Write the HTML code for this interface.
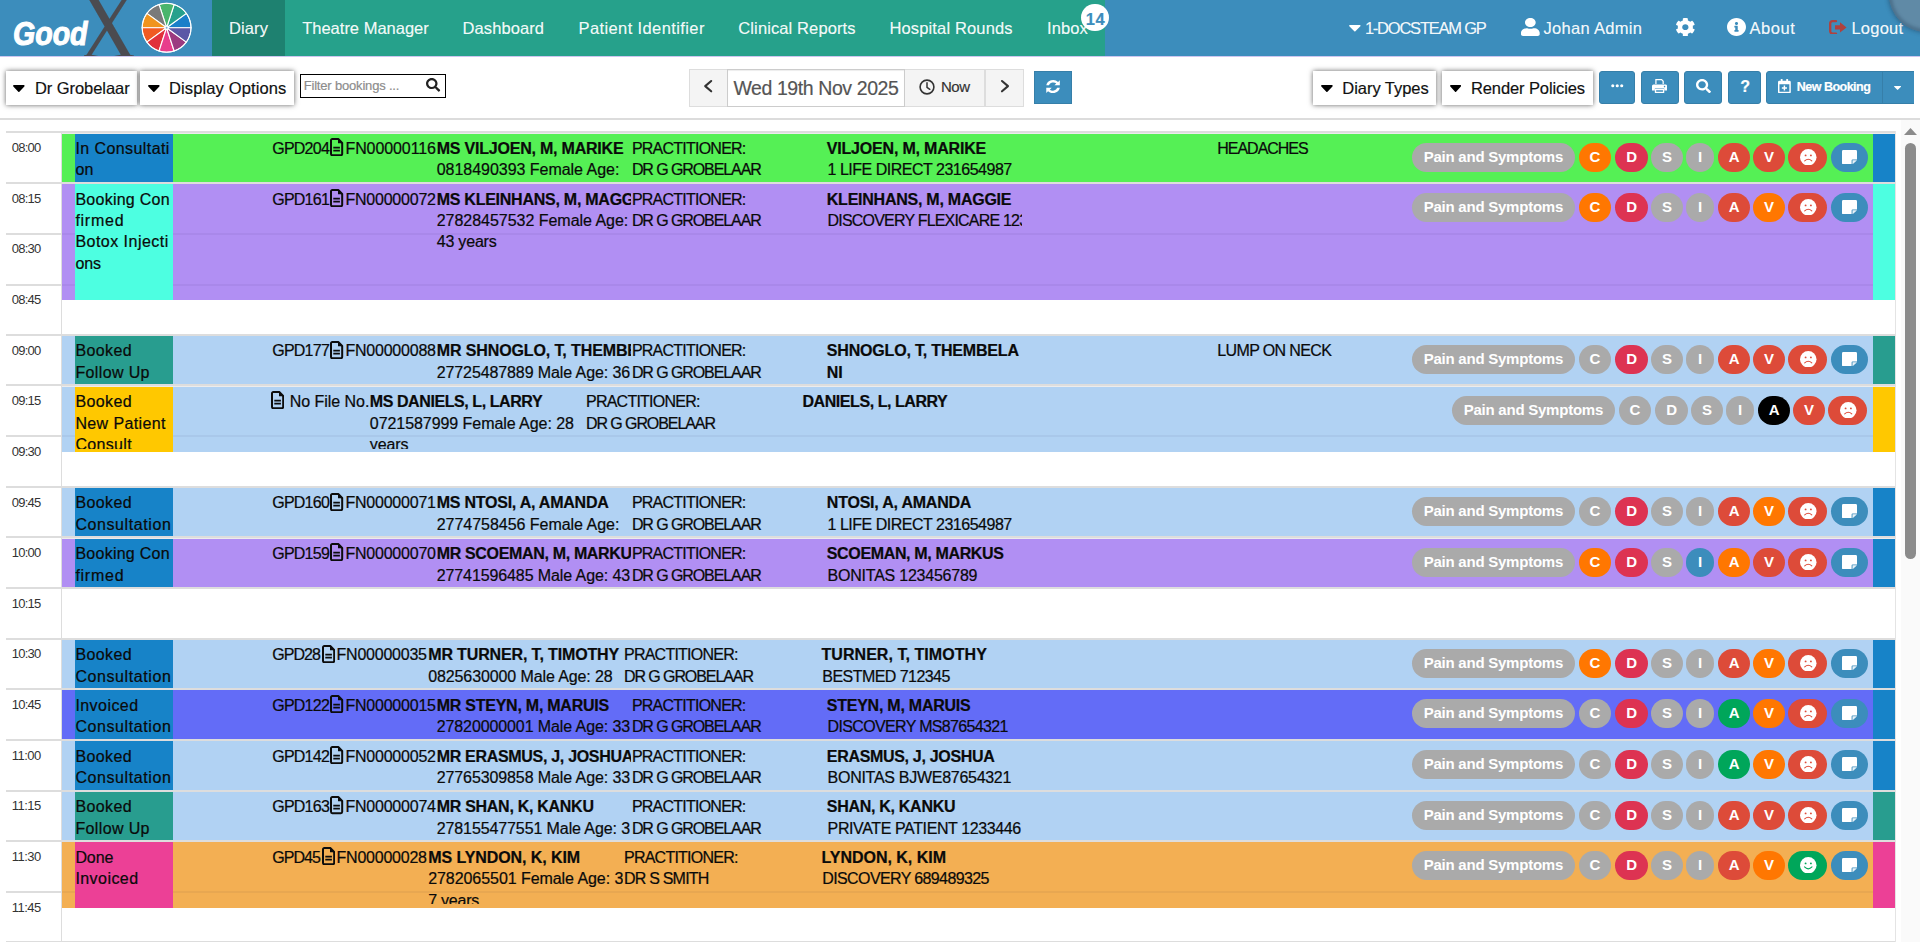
<!DOCTYPE html><html lang="en"><head><meta charset="utf-8"><title>GoodX Diary</title><style>
html,body{margin:0;padding:0}
body{width:1920px;height:942px;overflow:hidden;background:#fff;position:relative;font-family:"Liberation Sans",sans-serif;color:#111}
.b,.t,.ic,.c{position:absolute}
.t{white-space:nowrap;line-height:20px}
.b{box-sizing:border-box}
.c{overflow:hidden}
.ev .t{color:#0a0a0a;-webkit-text-stroke-width:.22px}
.bd{position:absolute;height:29px;border-radius:14.5px;top:9px}
.bd .t{color:#fff;-webkit-text-stroke-width:0}
#navbar .t,#toolbar .t{-webkit-text-stroke-width:.18px}
</style></head><body>
<div id="navbar">
<div class="b" style="left:0px;top:0px;width:1920px;height:56px;background:#3c8dbc;"></div>
<div class="b" style="left:212px;top:0px;width:893px;height:56px;background:#26a18b;"></div>
<div class="b" style="left:212px;top:0px;width:73px;height:56px;background:#1e8170;"></div>
<div class="b" style="left:0px;top:56px;width:1920px;height:1px;background:#cdc6f0;"></div>
<span class="t" style="left:13.2px;top:14.5px;font-size:34px;line-height:36px;font-weight:bold;font-style:italic;color:#fff;transform:scaleX(.84);transform-origin:0 0;letter-spacing:0px;-webkit-text-stroke:1.1px #fff">Good</span>
<div class="c" style="left:84px;top:0;width:50px;height:56px"><span class="t" style="left:-5px;top:-21px;font-family:'Liberation Serif',serif;font-size:96px;line-height:96px;color:#4b4b50;transform:scaleX(.845);transform-origin:0 0">X</span></div>
<svg class="ic" style="left:136.00px;top:0.00px;" width="62.00" height="56.00" viewBox="136 0 62 56" preserveAspectRatio="none"><path d="M166.6 27.75L191.00 27.75A24.4 24.4 0 0 0 186.34 13.41Z" fill="#1a7fc9" stroke="#fff" stroke-width="1.1"/><path d="M166.6 27.75L186.34 13.41A24.4 24.4 0 0 0 174.14 4.54Z" fill="#26a08c" stroke="#fff" stroke-width="1.1"/><path d="M166.6 27.75L174.14 4.54A24.4 24.4 0 0 0 159.06 4.54Z" fill="#4ab56c" stroke="#fff" stroke-width="1.1"/><path d="M166.6 27.75L159.06 4.54A24.4 24.4 0 0 0 146.86 13.41Z" fill="#7a7a7a" stroke="#fff" stroke-width="1.1"/><path d="M166.6 27.75L146.86 13.41A24.4 24.4 0 0 0 142.20 27.75Z" fill="#f0941e" stroke="#fff" stroke-width="1.1"/><path d="M166.6 27.75L142.20 27.75A24.4 24.4 0 0 0 146.86 42.09Z" fill="#f05a22" stroke="#fff" stroke-width="1.1"/><path d="M166.6 27.75L146.86 42.09A24.4 24.4 0 0 0 159.06 50.96Z" fill="#e0323c" stroke="#fff" stroke-width="1.1"/><path d="M166.6 27.75L159.06 50.96A24.4 24.4 0 0 0 174.14 50.96Z" fill="#e83e8c" stroke="#fff" stroke-width="1.1"/><path d="M166.6 27.75L174.14 50.96A24.4 24.4 0 0 0 186.34 42.09Z" fill="#9c3a80" stroke="#fff" stroke-width="1.1"/><path d="M166.6 27.75L186.34 42.09A24.4 24.4 0 0 0 191.00 27.75Z" fill="#5b57a6" stroke="#fff" stroke-width="1.1"/><circle cx="166.6" cy="27.75" r="24.4" fill="none" stroke="#fff" stroke-width="1"/><circle cx="166.6" cy="27.75" r="2.2" fill="#fff"/><circle cx="166.6" cy="27.75" r="1" fill="#7fb0d8"/></svg>
<span class="t" style="left:229.00px;top:18px;font-size:16.5px;letter-spacing:0.122px;color:rgba(255,255,255,.96);">Diary</span>
<span class="t" style="left:302.20px;top:18px;font-size:16.5px;color:rgba(255,255,255,.96);">Theatre Manager</span>
<span class="t" style="left:462.50px;top:18px;font-size:16.5px;letter-spacing:0.098px;color:rgba(255,255,255,.96);">Dashboard</span>
<span class="t" style="left:578.50px;top:18px;font-size:16.5px;letter-spacing:0.391px;color:rgba(255,255,255,.96);">Patient Identifier</span>
<span class="t" style="left:738.30px;top:18px;font-size:16.5px;letter-spacing:0.111px;color:rgba(255,255,255,.96);">Clinical Reports</span>
<span class="t" style="left:889.40px;top:18px;font-size:16.5px;letter-spacing:0.153px;color:rgba(255,255,255,.96);">Hospital Rounds</span>
<span class="t" style="left:1047.00px;top:18px;font-size:16.5px;letter-spacing:0.110px;color:rgba(255,255,255,.96);">Inbox</span>
<div class="b" style="left:1081.3px;top:3.8px;width:27.6px;height:27.6px;border-radius:50%;background:#fff"></div>
<span class="t" style="left:1085.70px;top:9px;font-size:16.5px;font-weight:bold;letter-spacing:0.652px;color:#3c8dbc;">14</span>
<svg class="ic" style="left:1348.90px;top:25.40px;" width="11.70" height="6.40" viewBox="9 192 302 169" preserveAspectRatio="none"><path fill="#fff" d="M31.3 192h257.3c17.8 0 26.7 21.5 14.1 34.1L174.1 354.8c-7.8 7.8-20.5 7.8-28.3 0L17.2 226.1C4.6 213.5 13.5 192 31.3 192z"/></svg>
<span class="t" style="left:1364.90px;top:18px;font-size:16.5px;letter-spacing:-1.225px;color:rgba(255,255,255,.96);">1-DOCSTEAM GP</span>
<svg class="ic" style="left:1521.00px;top:18.00px;" width="18.70" height="18.00" viewBox="0 0 448 512" preserveAspectRatio="none"><path fill="#fff" d="M224 256c70.7 0 128-57.3 128-128S294.7 0 224 0 96 57.3 96 128s57.300 128 128 128zm89.600 32h-16.700c-22.200 10.200-46.900 16-72.900 16s-50.600-5.800-72.900-16h-16.700C60.200 288 0 348.200 0 422.400V464c0 26.500 21.500 48 48 48h352c26.500 0 48-21.500 48-48v-41.600c0-74.200-60.200-134.400-134.400-134.400z"/></svg>
<span class="t" style="left:1543.50px;top:18px;font-size:16.5px;letter-spacing:0.310px;color:rgba(255,255,255,.96);">Johan Admin</span>
<svg class="ic" style="left:1676.00px;top:18.00px;" width="18.70" height="18.30" viewBox="18 8 476 496" preserveAspectRatio="none"><path fill="#fff" d="M487.400 315.700l-42.600-24.600c4.300-23.200 4.300-47 0-70.200l42.600-24.600c4.900-2.800 7.100-8.600 5.500-14-11.100-35.600-30-67.800-54.700-94.600-3.800-4.100-10-5.100-14.800-2.300L380.800 110c-17.900-15.400-38.500-27.300-60.800-35.100V25.800c0-5.600-3.900-10.500-9.400-11.700-36.700-8.200-74.300-7.800-109.200 0-5.500 1.200-9.400 6.100-9.400 11.700V75c-22.200 7.900-42.800 19.800-60.800 35.100L88.700 85.500c-4.900-2.800-11-1.900-14.800 2.300-24.700 26.700-43.600 58.900-54.700 94.600-1.700 5.400.6 11.200 5.500 14L67.300 221c-4.300 23.200-4.300 47 0 70.200l-42.600 24.600c-4.900 2.800-7.100 8.600-5.500 14 11.100 35.600 30 67.800 54.700 94.600 3.800 4.100 10 5.100 14.800 2.300l42.600-24.600c17.900 15.400 38.500 27.300 60.800 35.100v49.200c0 5.600 3.900 10.500 9.400 11.700 36.700 8.200 74.300 7.800 109.200 0 5.500-1.200 9.400-6.100 9.400-11.700v-49.200c22.200-7.900 42.800-19.800 60.800-35.100l42.600 24.600c4.900 2.800 11 1.900 14.800-2.300 24.700-26.700 43.600-58.900 54.700-94.600 1.500-5.500-.7-11.300-5.600-14.100zM256 336c-44.100 0-80-35.900-80-80s35.900-80 80-80 80 35.900 80 80-35.900 80-80 80z"/></svg>
<svg class="ic" style="left:1727.30px;top:18.30px;" width="19.00" height="18.00" viewBox="8 8 496 496" preserveAspectRatio="none"><path fill="#fff" d="M256 8C119.043 8 8 119.083 8 256c0 136.997 111.043 248 248 248s248-111.003 248-248C504 119.083 392.957 8 256 8zm0 110c23.196 0 42 18.804 42 42s-18.804 42-42 42-42-18.804-42-42 18.804-42 42-42zm56 254c0 6.627-5.373 12-12 12h-88c-6.627 0-12-5.373-12-12v-24c0-6.627 5.373-12 12-12h12v-64h-12c-6.627 0-12-5.373-12-12v-24c0-6.627 5.373-12 12-12h64c6.627 0 12 5.373 12 12v100h12c6.627 0 12 5.373 12 12v24z"/></svg>
<span class="t" style="left:1749.60px;top:18px;font-size:16.5px;letter-spacing:0.521px;color:rgba(255,255,255,.96);">About</span>
<svg class="ic" style="left:1828.90px;top:19.70px;" width="17.70" height="14.80" viewBox="0 0 17.7 15" preserveAspectRatio="none"><path d="M7 1.2H3.6A2.4 2.4 0 0 0 1.200 3.600V11.400A2.400 2.400 0 0 0 3.600 13.800H7" fill="none" stroke="#b0413e" stroke-width="2.3" stroke-linecap="round"/><path d="M6 5.400H11V2.300L17.600 7.500L11 12.700V9.600H6Z" fill="#b0413e"/></svg>
<span class="t" style="left:1851.40px;top:18px;font-size:16.5px;letter-spacing:0.245px;color:rgba(255,255,255,.96);">Logout</span>
<div class="b" style="left:1888.5px;top:-43.5px;width:75px;height:75px;border-radius:50%;background:rgba(140,136,140,.46);box-shadow:inset 0 0 3px 3px rgba(30,55,80,.28),0 0 4px 1px rgba(30,55,80,.45)"></div>
</div>
<div id="toolbar">
<div class="b" style="left:0px;top:118px;width:1920px;height:2px;background:#dcdcdc;"></div>
<div class="b" style="left:6px;top:71px;width:131px;height:34px;background:#fff;box-shadow:0 0 5px rgba(0,0,0,.62)"></div>
<svg class="ic" style="left:13.10px;top:85.10px;" width="11.70" height="6.90" viewBox="9 192 302 169" preserveAspectRatio="none"><path fill="#000" d="M31.3 192h257.3c17.8 0 26.7 21.5 14.1 34.1L174.1 354.8c-7.8 7.8-20.5 7.8-28.3 0L17.2 226.1C4.6 213.5 13.5 192 31.3 192z"/></svg>
<span class="t" style="left:34.90px;top:78px;font-size:16.5px;letter-spacing:-0.052px;color:#111;">Dr Grobelaar</span>
<div class="b" style="left:140px;top:71px;width:154px;height:34px;background:#fff;box-shadow:0 0 5px rgba(0,0,0,.62)"></div>
<svg class="ic" style="left:148.00px;top:85.10px;" width="11.70" height="6.90" viewBox="9 192 302 169" preserveAspectRatio="none"><path fill="#000" d="M31.3 192h257.3c17.8 0 26.7 21.5 14.1 34.1L174.1 354.8c-7.8 7.8-20.5 7.8-28.3 0L17.2 226.1C4.6 213.5 13.5 192 31.3 192z"/></svg>
<span class="t" style="left:169.00px;top:78px;font-size:16.5px;letter-spacing:0.125px;color:#111;">Display Options</span>
<div class="b" style="left:1313px;top:71px;width:123px;height:34px;background:#fff;box-shadow:0 0 5px rgba(0,0,0,.62)"></div>
<svg class="ic" style="left:1321.00px;top:85.10px;" width="11.80" height="6.90" viewBox="9 192 302 169" preserveAspectRatio="none"><path fill="#000" d="M31.3 192h257.3c17.8 0 26.7 21.5 14.1 34.1L174.1 354.8c-7.8 7.8-20.5 7.8-28.3 0L17.2 226.1C4.6 213.5 13.5 192 31.3 192z"/></svg>
<span class="t" style="left:1342.30px;top:78px;font-size:16.5px;letter-spacing:-0.041px;color:#111;">Diary Types</span>
<div class="b" style="left:1442px;top:71px;width:151px;height:34px;background:#fff;box-shadow:0 0 5px rgba(0,0,0,.62)"></div>
<svg class="ic" style="left:1449.80px;top:85.10px;" width="11.20" height="6.90" viewBox="9 192 302 169" preserveAspectRatio="none"><path fill="#000" d="M31.3 192h257.3c17.8 0 26.7 21.5 14.1 34.1L174.1 354.8c-7.8 7.8-20.5 7.8-28.3 0L17.2 226.1C4.6 213.5 13.5 192 31.3 192z"/></svg>
<span class="t" style="left:1471.00px;top:78px;font-size:16.5px;letter-spacing:-0.111px;color:#111;">Render Policies</span>
<div class="b" style="left:300px;top:74px;width:146px;height:24px;border:1px solid #000;background:#fff"></div>
<span class="t" style="left:303.70px;top:76px;font-size:13px;letter-spacing:-0.182px;color:#8c8c8c;">Filter bookings ...</span>
<svg class="ic" style="left:426.40px;top:78.20px;" width="14.20" height="13.70" viewBox="0 0 512 512" preserveAspectRatio="none"><path fill="#222" d="M505 442.700L405.300 343c-4.500-4.500-10.600-7-17-7H372c27.600-35.300 44-79.700 44-128C416 93.100 322.900 0 208 0S0 93.100 0 208s93.100 208 208 208c48.300 0 92.700-16.400 128-44v16.300c0 6.400 2.500 12.500 7 17l99.700 99.700c9.400 9.400 24.600 9.400 33.900 0l28.300-28.300c9.400-9.400 9.400-24.600.100-34zM208 336c-70.700 0-128-57.200-128-128 0-70.700 57.200-128 128-128 70.700 0 128 57.200 128 128 0 70.700-57.200 128-128 128z"/></svg>
<div class="b" style="left:689px;top:69px;width:39px;height:38px;background:#f4f4f4;border:1px solid #ddd"></div>
<div class="b" style="left:904px;top:69px;width:81px;height:38px;background:#f4f4f4;border:1px solid #ddd"></div>
<div class="b" style="left:985px;top:69px;width:39px;height:38px;background:#f4f4f4;border:1px solid #ddd"></div>
<div class="b" style="left:727px;top:69px;width:178px;height:38px;background:#fff;border:1px solid #ccc;box-shadow:inset 0 1px 1px rgba(0,0,0,.075)"></div>
<span class="t" style="left:733.40px;top:76px;font-size:19.5px;line-height:24px;letter-spacing:-0.407px;color:#555;">Wed 19th Nov 2025</span>
<svg class="ic" style="left:703.30px;top:79.00px;" width="10.20" height="14.30" viewBox="0 0 10.2 14.3" preserveAspectRatio="none"><path d="M8.200 2L2.200 7.150L8.200 12.300" fill="none" stroke="#333" stroke-width="2.100" stroke-linecap="round" stroke-linejoin="round"/></svg>
<svg class="ic" style="left:999.80px;top:79.00px;" width="10.20" height="14.30" viewBox="0 0 10.2 14.3" preserveAspectRatio="none"><path d="M2 2L8 7.150L2 12.300" fill="none" stroke="#333" stroke-width="2.100" stroke-linecap="round" stroke-linejoin="round"/></svg>
<svg class="ic" style="left:918.70px;top:78.50px;" width="16.00" height="16.00" viewBox="0 0 16 16" preserveAspectRatio="none"><circle cx="8" cy="8" r="6.900" fill="none" stroke="#333" stroke-width="1.600"/><path d="M8 3.800V8.300L10.800 10.300" fill="none" stroke="#333" stroke-width="1.500" stroke-linecap="round"/></svg>
<span class="t" style="left:941.00px;top:77px;font-size:15px;letter-spacing:-0.523px;color:#333;">Now</span>
<div class="b" style="left:1033.5px;top:71px;width:38.500px;height:33px;background:#3c8dbc;border:1px solid #367fa9"></div>
<svg class="ic" style="left:1046.00px;top:80.10px;" width="14.10" height="13.20" viewBox="0 0 16 16" preserveAspectRatio="none"><path d="M13.700 2.300A8 8 0 0 0 0.300 6.500H3.300A5.200 5.200 0 0 1 11.700 4.300L9.500 6.500H15.700V0.300ZM2.300 13.700A8 8 0 0 0 15.700 9.500H12.700A5.200 5.200 0 0 1 4.300 11.700L6.500 9.500H0.300V15.700Z" fill="#fff"/></svg>
<div class="b" style="left:1599px;top:71px;width:36px;height:33px;background:#3c8dbc;border:1px solid #367fa9;border-radius:3px;"></div>
<div class="b" style="left:1641px;top:71px;width:38px;height:33px;background:#3c8dbc;border:1px solid #367fa9;border-radius:3px;"></div>
<div class="b" style="left:1684px;top:71px;width:38px;height:33px;background:#3c8dbc;border:1px solid #367fa9;border-radius:3px;"></div>
<div class="b" style="left:1728px;top:71px;width:33px;height:33px;background:#3c8dbc;border:1px solid #367fa9;border-radius:3px;"></div>
<div class="b" style="left:1766px;top:71px;width:117px;height:33px;background:#3c8dbc;border:1px solid #367fa9;border-radius:3px;border-radius:3px 0 0 3px"></div>
<div class="b" style="left:1882px;top:71px;width:32px;height:33px;background:#3c8dbc;border:1px solid #367fa9;border-radius:3px;border-radius:0;border-right:0"></div>
<svg class="ic" style="left:1611.00px;top:84.10px;" width="12.50" height="3.60" viewBox="0 0 12 3.5" preserveAspectRatio="none"><circle cx="1.700" cy="1.750" r="1.500" fill="#fff"/><circle cx="6" cy="1.750" r="1.500" fill="#fff"/><circle cx="10.300" cy="1.750" r="1.500" fill="#fff"/></svg>
<svg class="ic" style="left:1652.20px;top:78.80px;" width="15.10" height="14.00" viewBox="0 0 16 14" preserveAspectRatio="none"><path d="M3.500 0H10.500L12.500 2V5H3.500Z M4.800 1.300V5H11.200V2.600L10 1.300Z" fill="#fff" fill-rule="evenodd"/><path d="M1.600 5.500H14.400A1.600 1.600 0 0 1 16 7.100V11.500H13V9.500H3V11.500H0V7.100A1.600 1.600 0 0 1 1.600 5.500Z" fill="#fff"/><path d="M3 10H13V14H3Z M4.400 11.300V12.700H11.600V11.300Z" fill="#fff" fill-rule="evenodd"/><circle cx="13.300" cy="7.600" r=".8" fill="#3c8dbc"/></svg>
<svg class="ic" style="left:1695.70px;top:78.90px;" width="15.00" height="14.10" viewBox="0 0 512 512" preserveAspectRatio="none"><path fill="#fff" d="M505 442.700L405.300 343c-4.500-4.500-10.600-7-17-7H372c27.600-35.300 44-79.700 44-128C416 93.100 322.900 0 208 0S0 93.100 0 208s93.100 208 208 208c48.300 0 92.700-16.400 128-44v16.300c0 6.400 2.500 12.500 7 17l99.700 99.700c9.400 9.400 24.600 9.400 33.900 0l28.300-28.300c9.400-9.400 9.400-24.600.100-34zM208 336c-70.700 0-128-57.200-128-128 0-70.700 57.200-128 128-128 70.700 0 128 57.200 128 128 0 70.700-57.200 128-128 128z"/></svg>
<span class="t" style="left:1740.20px;top:77px;font-size:16px;font-weight:bold;color:#fff;">?</span>
<svg class="ic" style="left:1778.20px;top:78.60px;" width="12.80" height="14.30" viewBox="0 0 14 15.5" preserveAspectRatio="none"><path d="M1.500 2H12.500A1.500 1.500 0 0 1 14 3.500V14A1.500 1.500 0 0 1 12.500 15.500H1.500A1.500 1.500 0 0 1 0 14V3.500A1.500 1.500 0 0 1 1.500 2Z M1.600 5.600V13.900H12.400V5.600Z" fill="#fff" fill-rule="evenodd"/><rect x="3" y="0" width="2" height="3.500" rx=".6" fill="#fff"/><rect x="9" y="0" width="2" height="3.500" rx=".6" fill="#fff"/><path d="M6.200 7H7.800V9H9.800V10.600H7.800V12.600H6.200V10.600H4.200V9H6.200Z" fill="#fff"/></svg>
<span class="t" style="left:1796.80px;top:77px;font-size:12.5px;font-weight:bold;letter-spacing:-0.517px;color:#fff;">New Booking</span>
<svg class="ic" style="left:1894.20px;top:86.00px;" width="7.20" height="4.00" viewBox="9 192 302 169" preserveAspectRatio="none"><path fill="#fff" d="M31.3 192h257.3c17.8 0 26.7 21.5 14.1 34.1L174.1 354.8c-7.8 7.8-20.5 7.8-28.3 0L17.2 226.1C4.6 213.5 13.5 192 31.3 192z"/></svg>
</div>
<div id="grid">
<div class="b" style="left:1901px;top:120px;width:19px;height:822px;background:#fafafa;"></div>
<svg class="ic" style="left:1904px;top:128px" width="13" height="7" viewBox="0 0 13 7"><path d="M0 7L6.500 0L13 7Z" fill="#8b8b8b"/></svg>
<div class="b" style="left:1905px;top:143px;width:11px;height:416px;background:#8b8b8b;border-radius:5.5px"></div>
<div class="b" style="left:61px;top:131px;width:1px;height:811px;background:#dddddd;"></div>
<div class="b" style="left:1895px;top:131px;width:1px;height:811px;background:#e4e4e4;"></div>
<div class="b" style="left:6px;top:131px;width:1889px;height:2px;background:#dddddd;"></div>
<div class="b" style="left:62px;top:133px;width:1833px;height:1px;background:#ececec;"></div>
<div class="b" style="left:6px;top:182px;width:1889px;height:2px;background:#dddddd;"></div>
<div class="b" style="left:6px;top:233px;width:1889px;height:2px;background:#dddddd;"></div>
<div class="b" style="left:6px;top:284px;width:1889px;height:2px;background:#dddddd;"></div>
<div class="b" style="left:6px;top:334px;width:1889px;height:2px;background:#dddddd;"></div>
<div class="b" style="left:6px;top:384px;width:1889px;height:2px;background:#dddddd;"></div>
<div class="b" style="left:62px;top:386px;width:1833px;height:1px;background:#ececec;"></div>
<div class="b" style="left:6px;top:435px;width:1889px;height:2px;background:#dddddd;"></div>
<div class="b" style="left:6px;top:486px;width:1889px;height:2px;background:#dddddd;"></div>
<div class="b" style="left:6px;top:536px;width:1889px;height:2px;background:#dddddd;"></div>
<div class="b" style="left:62px;top:538px;width:1833px;height:1px;background:#ececec;"></div>
<div class="b" style="left:6px;top:587px;width:1889px;height:2px;background:#dddddd;"></div>
<div class="b" style="left:6px;top:638px;width:1889px;height:2px;background:#dddddd;"></div>
<div class="b" style="left:6px;top:688px;width:1889px;height:2px;background:#dddddd;"></div>
<div class="b" style="left:6px;top:739px;width:1889px;height:2px;background:#dddddd;"></div>
<div class="b" style="left:6px;top:790px;width:1889px;height:2px;background:#dddddd;"></div>
<div class="b" style="left:6px;top:840px;width:1889px;height:2px;background:#dddddd;"></div>
<div class="b" style="left:6px;top:891px;width:1889px;height:2px;background:#dddddd;"></div>
<div class="b" style="left:6px;top:941px;width:1889px;height:2px;background:#dddddd;"></div>
<span class="t" style="left:11.65px;top:138px;font-size:13px;letter-spacing:-0.707px;color:#333;">08:00</span>
<span class="t" style="left:11.65px;top:189px;font-size:13px;letter-spacing:-0.707px;color:#333;">08:15</span>
<span class="t" style="left:11.65px;top:239px;font-size:13px;letter-spacing:-0.707px;color:#333;">08:30</span>
<span class="t" style="left:11.65px;top:290px;font-size:13px;letter-spacing:-0.707px;color:#333;">08:45</span>
<span class="t" style="left:11.65px;top:341px;font-size:13px;letter-spacing:-0.707px;color:#333;">09:00</span>
<span class="t" style="left:11.65px;top:391px;font-size:13px;letter-spacing:-0.707px;color:#333;">09:15</span>
<span class="t" style="left:11.65px;top:442px;font-size:13px;letter-spacing:-0.707px;color:#333;">09:30</span>
<span class="t" style="left:11.65px;top:493px;font-size:13px;letter-spacing:-0.707px;color:#333;">09:45</span>
<span class="t" style="left:11.65px;top:543px;font-size:13px;letter-spacing:-0.707px;color:#333;">10:00</span>
<span class="t" style="left:11.65px;top:594px;font-size:13px;letter-spacing:-0.707px;color:#333;">10:15</span>
<span class="t" style="left:11.65px;top:644px;font-size:13px;letter-spacing:-0.707px;color:#333;">10:30</span>
<span class="t" style="left:11.65px;top:695px;font-size:13px;letter-spacing:-0.707px;color:#333;">10:45</span>
<span class="t" style="left:11.65px;top:746px;font-size:13px;letter-spacing:-0.466px;color:#333;">11:00</span>
<span class="t" style="left:11.65px;top:796px;font-size:13px;letter-spacing:-0.466px;color:#333;">11:15</span>
<span class="t" style="left:11.65px;top:847px;font-size:13px;letter-spacing:-0.466px;color:#333;">11:30</span>
<span class="t" style="left:11.65px;top:898px;font-size:13px;letter-spacing:-0.466px;color:#333;">11:45</span>
<div class="b ev" style="left:62px;top:134px;width:1833px;height:48px;background:#55f055;overflow:hidden"><div class="b" style="left:13px;top:0;width:98px;height:48px;background:#1783c8"></div><div class="b" style="left:1811px;top:0;width:22px;height:48px;background:#1783c8"></div><div class="c" style="left:0;top:0;width:1811px;height:45px"><span class="t" style="left:13.40px;top:5px;font-size:16px;letter-spacing:0.424px;">In Consultati</span><span class="t" style="left:13.40px;top:26px;font-size:16px;letter-spacing:0.190px;">on</span><span class="t" style="left:210.20px;top:5px;font-size:16px;letter-spacing:-0.756px;">GPD204</span><svg class="ic" style="left:268.48px;top:4.00px;" width="13.20" height="18.20" viewBox="0 0 13.2 17.7" preserveAspectRatio="none"><path d="M2.300 1H8.300L12.200 4.900V15.400A1.300 1.300 0 0 1 10.900 16.700H2.300A1.300 1.300 0 0 1 1 15.400V2.300A1.300 1.300 0 0 1 2.300 1Z" fill="none" stroke="#0c0c0c" stroke-width="2" stroke-linejoin="round"/><path d="M8 0.800L12.400 5.200H8Z" fill="#0c0c0c"/><path d="M3.300 9.300H9.900M3.300 12.300H9.900" stroke="#0c0c0c" stroke-width="1.800"/></svg><span class="t" style="left:283.48px;top:5px;font-size:16px;letter-spacing:-0.094px;">FN00000116</span><div class="c" style="left:372.70px;top:0;width:196.50px;height:48px"><span class="t" style="left:2.00px;top:5px;font-size:16px;font-weight:bold;letter-spacing:-0.210px;">MS VILJOEN, M, MARIKE</span><span class="t" style="left:2.00px;top:26px;font-size:16px;letter-spacing:-0.029px;">0818490393 Female Age:</span></div><span class="t" style="left:569.90px;top:5px;font-size:16px;letter-spacing:-0.764px;">PRACTITIONER:</span><span class="t" style="left:569.90px;top:26px;font-size:16px;letter-spacing:-1.084px;">DR G GROBELAAR</span><div class="c" style="left:762.80px;top:0;width:197.00px;height:48px"><span class="t" style="left:2.00px;top:5px;font-size:16px;font-weight:bold;letter-spacing:-0.191px;">VILJOEN, M, MARIKE</span><span class="t" style="left:2.80px;top:26px;font-size:16px;letter-spacing:-0.490px;">1 LIFE DIRECT 231654987</span></div><span class="t" style="left:1155.30px;top:5px;font-size:16px;letter-spacing:-1.027px;">HEADACHES</span></div><div class="bd" style="margin-left:-62px;left:1412.0px;width:163.0px;background:#aaaaaa"><span class="t" style="left:11.70px;top:4px;font-size:15px;font-weight:bold;letter-spacing:-0.236px;">Pain and Symptoms</span></div><div class="bd" style="margin-left:-62px;left:1579.0px;width:32.0px;background:#ff7701"><span class="t" style="left:10.59px;top:4px;font-size:15px;font-weight:bold;">C</span></div><div class="bd" style="margin-left:-62px;left:1615.3px;width:32.5px;background:#dd3352"><span class="t" style="left:10.84px;top:4px;font-size:15px;font-weight:bold;">D</span></div><div class="bd" style="margin-left:-62px;left:1651.1px;width:31.9px;background:#aaaaaa"><span class="t" style="left:10.95px;top:4px;font-size:15px;font-weight:bold;">S</span></div><div class="bd" style="margin-left:-62px;left:1686.0px;width:28.0px;background:#aaaaaa"><span class="t" style="left:11.91px;top:4px;font-size:15px;font-weight:bold;">I</span></div><div class="bd" style="margin-left:-62px;left:1718.1px;width:31.9px;background:#dd4b39"><span class="t" style="left:10.54px;top:4px;font-size:15px;font-weight:bold;">A</span></div><div class="bd" style="margin-left:-62px;left:1753.0px;width:31.9px;background:#dd4b39"><span class="t" style="left:10.95px;top:4px;font-size:15px;font-weight:bold;">V</span></div><div class="bd" style="margin-left:-62px;left:1788.3px;width:38.8px;background:#dd4b39"><svg class="ic" style="left:11.75px;top:5.80px;" width="16.50" height="16.50" viewBox="0 0 16.5 16.5" preserveAspectRatio="none"><circle cx="8.250" cy="8.250" r="8.250" fill="#fff"/><circle cx="5.600" cy="6.400" r=".95" fill="#dd4b39"/><circle cx="10.900" cy="6.400" r=".95" fill="#dd4b39"/><path d="M4.700 11.900Q8.250 8.600 11.800 11.900" fill="none" stroke="#dd4b39" stroke-width="1.050" stroke-linecap="round"/></svg></div><div class="bd" style="margin-left:-62px;left:1830.9px;width:37.3px;background:#3c8dbc"><svg class="ic" style="left:11.45px;top:6.60px;" width="15.00" height="14.40" viewBox="0 0 15 13.5" preserveAspectRatio="none"><path d="M1.300 0H13.700A1.300 1.300 0 0 1 15 1.300V8.800H10.600A1 1 0 0 0 9.600 9.800V13.500H1.300A1.300 1.300 0 0 1 0 12.200V1.300A1.300 1.300 0 0 1 1.300 0Z" fill="#fff"/><path d="M10.500 9.700H15L10.500 13.500Z" fill="#fff" opacity=".88"/></svg></div></div>
<div class="b ev" style="left:62px;top:184px;width:1833px;height:116px;background:#b18ff3;overflow:hidden"><div class="b" style="left:0;top:49px;width:1811px;height:2px;background:rgba(0,0,40,.045)"></div><div class="b" style="left:0;top:100px;width:1811px;height:2px;background:rgba(0,0,40,.045)"></div><div class="b" style="left:13px;top:0;width:98px;height:116px;background:#4dffe1"></div><div class="b" style="left:1811px;top:0;width:22px;height:116px;background:#4dffe1"></div><div class="c" style="left:0;top:0;width:1811px;height:113px"><span class="t" style="left:13.40px;top:6px;font-size:16px;letter-spacing:0.260px;">Booking Con</span><span class="t" style="left:13.40px;top:27px;font-size:16px;letter-spacing:0.740px;">firmed</span><span class="t" style="left:13.40px;top:48px;font-size:16px;letter-spacing:0.476px;">Botox Injecti</span><span class="t" style="left:13.40px;top:70px;font-size:16px;letter-spacing:-0.134px;">ons</span><span class="t" style="left:210.20px;top:6px;font-size:16px;letter-spacing:-0.756px;">GPD161</span><svg class="ic" style="left:268.48px;top:4.65px;" width="13.20" height="18.20" viewBox="0 0 13.2 17.7" preserveAspectRatio="none"><path d="M2.300 1H8.300L12.200 4.900V15.400A1.300 1.300 0 0 1 10.900 16.700H2.300A1.300 1.300 0 0 1 1 15.400V2.300A1.300 1.300 0 0 1 2.300 1Z" fill="none" stroke="#0c0c0c" stroke-width="2" stroke-linejoin="round"/><path d="M8 0.800L12.400 5.200H8Z" fill="#0c0c0c"/><path d="M3.300 9.300H9.900M3.300 12.300H9.900" stroke="#0c0c0c" stroke-width="1.800"/></svg><span class="t" style="left:283.48px;top:6px;font-size:16px;letter-spacing:-0.225px;">FN00000072</span><div class="c" style="left:372.70px;top:0;width:196.50px;height:116px"><span class="t" style="left:2.00px;top:6px;font-size:16px;font-weight:bold;letter-spacing:-0.254px;">MS KLEINHANS, M, MAGGIE</span><span class="t" style="left:2.00px;top:27px;font-size:16px;letter-spacing:-0.026px;">27828457532 Female Age:</span><span class="t" style="left:2.00px;top:48px;font-size:16px;letter-spacing:-0.185px;">43 years</span></div><span class="t" style="left:569.90px;top:6px;font-size:16px;letter-spacing:-0.764px;">PRACTITIONER:</span><span class="t" style="left:569.90px;top:27px;font-size:16px;letter-spacing:-1.084px;">DR G GROBELAAR</span><div class="c" style="left:762.80px;top:0;width:197.00px;height:116px"><span class="t" style="left:2.00px;top:6px;font-size:16px;font-weight:bold;letter-spacing:-0.244px;">KLEINHANS, M, MAGGIE</span><span class="t" style="left:2.80px;top:27px;font-size:16px;letter-spacing:-0.804px;">DISCOVERY FLEXICARE 123456</span></div></div><div class="bd" style="margin-left:-62px;left:1412.0px;width:163.0px;background:#aaaaaa"><span class="t" style="left:11.70px;top:4px;font-size:15px;font-weight:bold;letter-spacing:-0.236px;">Pain and Symptoms</span></div><div class="bd" style="margin-left:-62px;left:1579.0px;width:32.0px;background:#ff7701"><span class="t" style="left:10.59px;top:4px;font-size:15px;font-weight:bold;">C</span></div><div class="bd" style="margin-left:-62px;left:1615.3px;width:32.5px;background:#dd3352"><span class="t" style="left:10.84px;top:4px;font-size:15px;font-weight:bold;">D</span></div><div class="bd" style="margin-left:-62px;left:1651.1px;width:31.9px;background:#aaaaaa"><span class="t" style="left:10.95px;top:4px;font-size:15px;font-weight:bold;">S</span></div><div class="bd" style="margin-left:-62px;left:1686.0px;width:28.0px;background:#aaaaaa"><span class="t" style="left:11.91px;top:4px;font-size:15px;font-weight:bold;">I</span></div><div class="bd" style="margin-left:-62px;left:1718.1px;width:31.9px;background:#dd4b39"><span class="t" style="left:10.54px;top:4px;font-size:15px;font-weight:bold;">A</span></div><div class="bd" style="margin-left:-62px;left:1753.0px;width:31.9px;background:#ff7701"><span class="t" style="left:10.95px;top:4px;font-size:15px;font-weight:bold;">V</span></div><div class="bd" style="margin-left:-62px;left:1788.3px;width:38.8px;background:#dd4b39"><svg class="ic" style="left:11.75px;top:5.80px;" width="16.50" height="16.50" viewBox="0 0 16.5 16.5" preserveAspectRatio="none"><circle cx="8.250" cy="8.250" r="8.250" fill="#fff"/><circle cx="5.600" cy="6.400" r=".95" fill="#dd4b39"/><circle cx="10.900" cy="6.400" r=".95" fill="#dd4b39"/><path d="M4.700 11.900Q8.250 8.600 11.800 11.900" fill="none" stroke="#dd4b39" stroke-width="1.050" stroke-linecap="round"/></svg></div><div class="bd" style="margin-left:-62px;left:1830.9px;width:37.3px;background:#3c8dbc"><svg class="ic" style="left:11.45px;top:6.60px;" width="15.00" height="14.40" viewBox="0 0 15 13.5" preserveAspectRatio="none"><path d="M1.300 0H13.700A1.300 1.300 0 0 1 15 1.300V8.800H10.600A1 1 0 0 0 9.600 9.800V13.500H1.300A1.300 1.300 0 0 1 0 12.200V1.300A1.300 1.300 0 0 1 1.300 0Z" fill="#fff"/><path d="M10.500 9.700H15L10.500 13.500Z" fill="#fff" opacity=".88"/></svg></div></div>
<div class="b ev" style="left:62px;top:336px;width:1833px;height:48px;background:#b1d2f3;overflow:hidden"><div class="b" style="left:13px;top:0;width:98px;height:48px;background:#289d8f"></div><div class="b" style="left:1811px;top:0;width:22px;height:48px;background:#289d8f"></div><div class="c" style="left:0;top:0;width:1811px;height:45px"><span class="t" style="left:13.40px;top:5px;font-size:16px;letter-spacing:0.406px;">Booked</span><span class="t" style="left:13.40px;top:27px;font-size:16px;letter-spacing:0.371px;">Follow Up</span><span class="t" style="left:210.20px;top:5px;font-size:16px;letter-spacing:-0.756px;">GPD177</span><svg class="ic" style="left:268.48px;top:4.60px;" width="13.20" height="18.20" viewBox="0 0 13.2 17.7" preserveAspectRatio="none"><path d="M2.300 1H8.300L12.200 4.900V15.400A1.300 1.300 0 0 1 10.900 16.700H2.300A1.300 1.300 0 0 1 1 15.400V2.300A1.300 1.300 0 0 1 2.300 1Z" fill="none" stroke="#0c0c0c" stroke-width="2" stroke-linejoin="round"/><path d="M8 0.800L12.400 5.200H8Z" fill="#0c0c0c"/><path d="M3.300 9.300H9.900M3.300 12.300H9.900" stroke="#0c0c0c" stroke-width="1.800"/></svg><span class="t" style="left:283.48px;top:5px;font-size:16px;letter-spacing:-0.225px;">FN00000088</span><div class="c" style="left:372.70px;top:0;width:196.50px;height:48px"><span class="t" style="left:2.00px;top:5px;font-size:16px;font-weight:bold;letter-spacing:-0.110px;">MR SHNOGLO, T, THEMBELANI</span><span class="t" style="left:2.00px;top:27px;font-size:16px;letter-spacing:-0.100px;">27725487889 Male Age: 36</span></div><span class="t" style="left:569.90px;top:5px;font-size:16px;letter-spacing:-0.764px;">PRACTITIONER:</span><span class="t" style="left:569.90px;top:27px;font-size:16px;letter-spacing:-1.084px;">DR G GROBELAAR</span><div class="c" style="left:762.80px;top:0;width:197.00px;height:48px"><span class="t" style="left:2.00px;top:5px;font-size:16px;font-weight:bold;letter-spacing:-0.176px;">SHNOGLO, T, THEMBELA</span><span class="t" style="left:2.00px;top:27px;font-size:16px;font-weight:bold;letter-spacing:-0.178px;">NI</span></div><span class="t" style="left:1155.30px;top:5px;font-size:16px;letter-spacing:-0.624px;">LUMP ON NECK</span></div><div class="bd" style="margin-left:-62px;left:1412.0px;width:163.0px;background:#aaaaaa"><span class="t" style="left:11.70px;top:4px;font-size:15px;font-weight:bold;letter-spacing:-0.236px;">Pain and Symptoms</span></div><div class="bd" style="margin-left:-62px;left:1579.0px;width:32.0px;background:#aaaaaa"><span class="t" style="left:10.59px;top:4px;font-size:15px;font-weight:bold;">C</span></div><div class="bd" style="margin-left:-62px;left:1615.3px;width:32.5px;background:#dd3352"><span class="t" style="left:10.84px;top:4px;font-size:15px;font-weight:bold;">D</span></div><div class="bd" style="margin-left:-62px;left:1651.1px;width:31.9px;background:#aaaaaa"><span class="t" style="left:10.95px;top:4px;font-size:15px;font-weight:bold;">S</span></div><div class="bd" style="margin-left:-62px;left:1686.0px;width:28.0px;background:#aaaaaa"><span class="t" style="left:11.91px;top:4px;font-size:15px;font-weight:bold;">I</span></div><div class="bd" style="margin-left:-62px;left:1718.1px;width:31.9px;background:#dd4b39"><span class="t" style="left:10.54px;top:4px;font-size:15px;font-weight:bold;">A</span></div><div class="bd" style="margin-left:-62px;left:1753.0px;width:31.9px;background:#dd4b39"><span class="t" style="left:10.95px;top:4px;font-size:15px;font-weight:bold;">V</span></div><div class="bd" style="margin-left:-62px;left:1788.3px;width:38.8px;background:#dd4b39"><svg class="ic" style="left:11.75px;top:5.80px;" width="16.50" height="16.50" viewBox="0 0 16.5 16.5" preserveAspectRatio="none"><circle cx="8.250" cy="8.250" r="8.250" fill="#fff"/><circle cx="5.600" cy="6.400" r=".95" fill="#dd4b39"/><circle cx="10.900" cy="6.400" r=".95" fill="#dd4b39"/><path d="M4.700 11.900Q8.250 8.600 11.800 11.900" fill="none" stroke="#dd4b39" stroke-width="1.050" stroke-linecap="round"/></svg></div><div class="bd" style="margin-left:-62px;left:1830.9px;width:37.3px;background:#3c8dbc"><svg class="ic" style="left:11.45px;top:6.60px;" width="15.00" height="14.40" viewBox="0 0 15 13.5" preserveAspectRatio="none"><path d="M1.300 0H13.700A1.300 1.300 0 0 1 15 1.300V8.800H10.600A1 1 0 0 0 9.600 9.800V13.500H1.300A1.300 1.300 0 0 1 0 12.200V1.300A1.300 1.300 0 0 1 1.300 0Z" fill="#fff"/><path d="M10.500 9.700H15L10.500 13.500Z" fill="#fff" opacity=".88"/></svg></div></div>
<div class="b ev" style="left:62px;top:387px;width:1833px;height:65px;background:#b1d2f3;overflow:hidden"><div class="b" style="left:0;top:48px;width:1811px;height:2px;background:rgba(0,0,40,.045)"></div><div class="b" style="left:13px;top:0;width:98px;height:65px;background:#ffc800"></div><div class="b" style="left:1811px;top:0;width:22px;height:65px;background:#ffc800"></div><div class="c" style="left:0;top:0;width:1811px;height:62px"><span class="t" style="left:13.40px;top:5px;font-size:16px;letter-spacing:0.406px;">Booked</span><span class="t" style="left:13.40px;top:27px;font-size:16px;letter-spacing:0.385px;">New Patient</span><span class="t" style="left:13.40px;top:48px;font-size:16px;letter-spacing:0.335px;">Consult</span><svg class="ic" style="left:209.20px;top:4.25px;" width="13.20" height="18.20" viewBox="0 0 13.2 17.7" preserveAspectRatio="none"><path d="M2.300 1H8.300L12.200 4.900V15.400A1.300 1.300 0 0 1 10.900 16.700H2.300A1.300 1.300 0 0 1 1 15.400V2.300A1.300 1.300 0 0 1 2.300 1Z" fill="none" stroke="#0c0c0c" stroke-width="2" stroke-linejoin="round"/><path d="M8 0.800L12.400 5.200H8Z" fill="#0c0c0c"/><path d="M3.300 9.300H9.900M3.300 12.300H9.900" stroke="#0c0c0c" stroke-width="1.800"/></svg><span class="t" style="left:227.70px;top:5px;font-size:16px;letter-spacing:-0.031px;">No File No.</span><div class="c" style="left:305.80px;top:0;width:217.50px;height:65px"><span class="t" style="left:2.00px;top:5px;font-size:16px;font-weight:bold;letter-spacing:-0.420px;">MS DANIELS, L, LARRY</span><span class="t" style="left:2.00px;top:27px;font-size:16px;letter-spacing:-0.057px;">0721587999 Female Age: 28</span><span class="t" style="left:2.00px;top:48px;font-size:16px;letter-spacing:-0.136px;">years</span></div><span class="t" style="left:524.00px;top:5px;font-size:16px;letter-spacing:-0.764px;">PRACTITIONER:</span><span class="t" style="left:524.00px;top:27px;font-size:16px;letter-spacing:-1.084px;">DR G GROBELAAR</span><div class="c" style="left:738.50px;top:0;width:197.00px;height:65px"><span class="t" style="left:2.00px;top:5px;font-size:16px;font-weight:bold;letter-spacing:-0.438px;">DANIELS, L, LARRY</span></div></div><div class="bd" style="margin-left:-62px;left:1452.0px;width:163.0px;background:#aaaaaa"><span class="t" style="left:11.70px;top:4px;font-size:15px;font-weight:bold;letter-spacing:-0.236px;">Pain and Symptoms</span></div><div class="bd" style="margin-left:-62px;left:1619.0px;width:32.0px;background:#aaaaaa"><span class="t" style="left:10.59px;top:4px;font-size:15px;font-weight:bold;">C</span></div><div class="bd" style="margin-left:-62px;left:1655.3px;width:32.5px;background:#aaaaaa"><span class="t" style="left:10.84px;top:4px;font-size:15px;font-weight:bold;">D</span></div><div class="bd" style="margin-left:-62px;left:1691.1px;width:31.9px;background:#aaaaaa"><span class="t" style="left:10.95px;top:4px;font-size:15px;font-weight:bold;">S</span></div><div class="bd" style="margin-left:-62px;left:1726.0px;width:28.0px;background:#aaaaaa"><span class="t" style="left:11.91px;top:4px;font-size:15px;font-weight:bold;">I</span></div><div class="bd" style="margin-left:-62px;left:1758.1px;width:31.9px;background:#000000"><span class="t" style="left:10.54px;top:4px;font-size:15px;font-weight:bold;">A</span></div><div class="bd" style="margin-left:-62px;left:1793.0px;width:31.9px;background:#dd4b39"><span class="t" style="left:10.95px;top:4px;font-size:15px;font-weight:bold;">V</span></div><div class="bd" style="margin-left:-62px;left:1828.3px;width:38.8px;background:#dd4b39"><svg class="ic" style="left:11.75px;top:5.80px;" width="16.50" height="16.50" viewBox="0 0 16.5 16.5" preserveAspectRatio="none"><circle cx="8.250" cy="8.250" r="8.250" fill="#fff"/><circle cx="5.600" cy="6.400" r=".95" fill="#dd4b39"/><circle cx="10.900" cy="6.400" r=".95" fill="#dd4b39"/><path d="M4.700 11.900Q8.250 8.600 11.800 11.900" fill="none" stroke="#dd4b39" stroke-width="1.050" stroke-linecap="round"/></svg></div></div>
<div class="b ev" style="left:62px;top:488px;width:1833px;height:48px;background:#b1d2f3;overflow:hidden"><div class="b" style="left:13px;top:0;width:98px;height:48px;background:#1783c8"></div><div class="b" style="left:1811px;top:0;width:22px;height:48px;background:#1783c8"></div><div class="c" style="left:0;top:0;width:1811px;height:45px"><span class="t" style="left:13.40px;top:5px;font-size:16px;letter-spacing:0.406px;">Booked</span><span class="t" style="left:13.40px;top:27px;font-size:16px;letter-spacing:0.592px;">Consultation</span><span class="t" style="left:210.20px;top:5px;font-size:16px;letter-spacing:-0.756px;">GPD160</span><svg class="ic" style="left:268.48px;top:4.55px;" width="13.20" height="18.20" viewBox="0 0 13.2 17.7" preserveAspectRatio="none"><path d="M2.300 1H8.300L12.200 4.900V15.400A1.300 1.300 0 0 1 10.900 16.700H2.300A1.300 1.300 0 0 1 1 15.400V2.300A1.300 1.300 0 0 1 2.300 1Z" fill="none" stroke="#0c0c0c" stroke-width="2" stroke-linejoin="round"/><path d="M8 0.800L12.400 5.200H8Z" fill="#0c0c0c"/><path d="M3.300 9.300H9.900M3.300 12.300H9.900" stroke="#0c0c0c" stroke-width="1.800"/></svg><span class="t" style="left:283.48px;top:5px;font-size:16px;letter-spacing:-0.225px;">FN00000071</span><div class="c" style="left:372.70px;top:0;width:196.50px;height:48px"><span class="t" style="left:2.00px;top:5px;font-size:16px;font-weight:bold;letter-spacing:-0.234px;">MS NTOSI, A, AMANDA</span><span class="t" style="left:2.00px;top:27px;font-size:16px;letter-spacing:-0.029px;">2774758456 Female Age:</span></div><span class="t" style="left:569.90px;top:5px;font-size:16px;letter-spacing:-0.764px;">PRACTITIONER:</span><span class="t" style="left:569.90px;top:27px;font-size:16px;letter-spacing:-1.084px;">DR G GROBELAAR</span><div class="c" style="left:762.80px;top:0;width:197.00px;height:48px"><span class="t" style="left:2.00px;top:5px;font-size:16px;font-weight:bold;letter-spacing:-0.215px;">NTOSI, A, AMANDA</span><span class="t" style="left:2.80px;top:27px;font-size:16px;letter-spacing:-0.490px;">1 LIFE DIRECT 231654987</span></div></div><div class="bd" style="margin-left:-62px;left:1412.0px;width:163.0px;background:#aaaaaa"><span class="t" style="left:11.70px;top:4px;font-size:15px;font-weight:bold;letter-spacing:-0.236px;">Pain and Symptoms</span></div><div class="bd" style="margin-left:-62px;left:1579.0px;width:32.0px;background:#aaaaaa"><span class="t" style="left:10.59px;top:4px;font-size:15px;font-weight:bold;">C</span></div><div class="bd" style="margin-left:-62px;left:1615.3px;width:32.5px;background:#dd3352"><span class="t" style="left:10.84px;top:4px;font-size:15px;font-weight:bold;">D</span></div><div class="bd" style="margin-left:-62px;left:1651.1px;width:31.9px;background:#aaaaaa"><span class="t" style="left:10.95px;top:4px;font-size:15px;font-weight:bold;">S</span></div><div class="bd" style="margin-left:-62px;left:1686.0px;width:28.0px;background:#aaaaaa"><span class="t" style="left:11.91px;top:4px;font-size:15px;font-weight:bold;">I</span></div><div class="bd" style="margin-left:-62px;left:1718.1px;width:31.9px;background:#dd4b39"><span class="t" style="left:10.54px;top:4px;font-size:15px;font-weight:bold;">A</span></div><div class="bd" style="margin-left:-62px;left:1753.0px;width:31.9px;background:#ff7701"><span class="t" style="left:10.95px;top:4px;font-size:15px;font-weight:bold;">V</span></div><div class="bd" style="margin-left:-62px;left:1788.3px;width:38.8px;background:#dd4b39"><svg class="ic" style="left:11.75px;top:5.80px;" width="16.50" height="16.50" viewBox="0 0 16.5 16.5" preserveAspectRatio="none"><circle cx="8.250" cy="8.250" r="8.250" fill="#fff"/><circle cx="5.600" cy="6.400" r=".95" fill="#dd4b39"/><circle cx="10.900" cy="6.400" r=".95" fill="#dd4b39"/><path d="M4.700 11.900Q8.250 8.600 11.800 11.900" fill="none" stroke="#dd4b39" stroke-width="1.050" stroke-linecap="round"/></svg></div><div class="bd" style="margin-left:-62px;left:1830.9px;width:37.3px;background:#3c8dbc"><svg class="ic" style="left:11.45px;top:6.60px;" width="15.00" height="14.40" viewBox="0 0 15 13.5" preserveAspectRatio="none"><path d="M1.300 0H13.700A1.300 1.300 0 0 1 15 1.300V8.800H10.600A1 1 0 0 0 9.600 9.800V13.500H1.300A1.300 1.300 0 0 1 0 12.200V1.300A1.300 1.300 0 0 1 1.300 0Z" fill="#fff"/><path d="M10.500 9.700H15L10.500 13.500Z" fill="#fff" opacity=".88"/></svg></div></div>
<div class="b ev" style="left:62px;top:539px;width:1833px;height:48px;background:#b18ff3;overflow:hidden"><div class="b" style="left:13px;top:0;width:98px;height:48px;background:#1783c8"></div><div class="b" style="left:1811px;top:0;width:22px;height:48px;background:#1783c8"></div><div class="c" style="left:0;top:0;width:1811px;height:45px"><span class="t" style="left:13.40px;top:5px;font-size:16px;letter-spacing:0.260px;">Booking Con</span><span class="t" style="left:13.40px;top:27px;font-size:16px;letter-spacing:0.740px;">firmed</span><span class="t" style="left:210.20px;top:5px;font-size:16px;letter-spacing:-0.756px;">GPD159</span><svg class="ic" style="left:268.48px;top:4.20px;" width="13.20" height="18.20" viewBox="0 0 13.2 17.7" preserveAspectRatio="none"><path d="M2.300 1H8.300L12.200 4.900V15.400A1.300 1.300 0 0 1 10.900 16.700H2.300A1.300 1.300 0 0 1 1 15.400V2.300A1.300 1.300 0 0 1 2.300 1Z" fill="none" stroke="#0c0c0c" stroke-width="2" stroke-linejoin="round"/><path d="M8 0.800L12.400 5.200H8Z" fill="#0c0c0c"/><path d="M3.300 9.300H9.900M3.300 12.300H9.900" stroke="#0c0c0c" stroke-width="1.800"/></svg><span class="t" style="left:283.48px;top:5px;font-size:16px;letter-spacing:-0.225px;">FN00000070</span><div class="c" style="left:372.70px;top:0;width:196.50px;height:48px"><span class="t" style="left:2.00px;top:5px;font-size:16px;font-weight:bold;letter-spacing:-0.335px;">MR SCOEMAN, M, MARKUS</span><span class="t" style="left:2.00px;top:27px;font-size:16px;letter-spacing:-0.100px;">27741596485 Male Age: 43</span></div><span class="t" style="left:569.90px;top:5px;font-size:16px;letter-spacing:-0.764px;">PRACTITIONER:</span><span class="t" style="left:569.90px;top:27px;font-size:16px;letter-spacing:-1.084px;">DR G GROBELAAR</span><div class="c" style="left:762.80px;top:0;width:197.00px;height:48px"><span class="t" style="left:2.00px;top:5px;font-size:16px;font-weight:bold;letter-spacing:-0.352px;">SCOEMAN, M, MARKUS</span><span class="t" style="left:2.80px;top:27px;font-size:16px;letter-spacing:-0.233px;">BONITAS 123456789</span></div></div><div class="bd" style="margin-left:-62px;left:1412.0px;width:163.0px;background:#aaaaaa"><span class="t" style="left:11.70px;top:4px;font-size:15px;font-weight:bold;letter-spacing:-0.236px;">Pain and Symptoms</span></div><div class="bd" style="margin-left:-62px;left:1579.0px;width:32.0px;background:#ff7701"><span class="t" style="left:10.59px;top:4px;font-size:15px;font-weight:bold;">C</span></div><div class="bd" style="margin-left:-62px;left:1615.3px;width:32.5px;background:#dd3352"><span class="t" style="left:10.84px;top:4px;font-size:15px;font-weight:bold;">D</span></div><div class="bd" style="margin-left:-62px;left:1651.1px;width:31.9px;background:#aaaaaa"><span class="t" style="left:10.95px;top:4px;font-size:15px;font-weight:bold;">S</span></div><div class="bd" style="margin-left:-62px;left:1686.0px;width:28.0px;background:#3c8dbc"><span class="t" style="left:11.91px;top:4px;font-size:15px;font-weight:bold;">I</span></div><div class="bd" style="margin-left:-62px;left:1718.1px;width:31.9px;background:#ff7701"><span class="t" style="left:10.54px;top:4px;font-size:15px;font-weight:bold;">A</span></div><div class="bd" style="margin-left:-62px;left:1753.0px;width:31.9px;background:#dd4b39"><span class="t" style="left:10.95px;top:4px;font-size:15px;font-weight:bold;">V</span></div><div class="bd" style="margin-left:-62px;left:1788.3px;width:38.8px;background:#dd4b39"><svg class="ic" style="left:11.75px;top:5.80px;" width="16.50" height="16.50" viewBox="0 0 16.5 16.5" preserveAspectRatio="none"><circle cx="8.250" cy="8.250" r="8.250" fill="#fff"/><circle cx="5.600" cy="6.400" r=".95" fill="#dd4b39"/><circle cx="10.900" cy="6.400" r=".95" fill="#dd4b39"/><path d="M4.700 11.900Q8.250 8.600 11.800 11.900" fill="none" stroke="#dd4b39" stroke-width="1.050" stroke-linecap="round"/></svg></div><div class="bd" style="margin-left:-62px;left:1830.9px;width:37.3px;background:#3c8dbc"><svg class="ic" style="left:11.45px;top:6.60px;" width="15.00" height="14.40" viewBox="0 0 15 13.5" preserveAspectRatio="none"><path d="M1.300 0H13.700A1.300 1.300 0 0 1 15 1.300V8.800H10.600A1 1 0 0 0 9.600 9.800V13.500H1.300A1.300 1.300 0 0 1 0 12.200V1.300A1.300 1.300 0 0 1 1.300 0Z" fill="#fff"/><path d="M10.500 9.700H15L10.500 13.500Z" fill="#fff" opacity=".88"/></svg></div></div>
<div class="b ev" style="left:62px;top:640px;width:1833px;height:48px;background:#b1d2f3;overflow:hidden"><div class="b" style="left:13px;top:0;width:98px;height:48px;background:#1783c8"></div><div class="b" style="left:1811px;top:0;width:22px;height:48px;background:#1783c8"></div><div class="c" style="left:0;top:0;width:1811px;height:45px"><span class="t" style="left:13.40px;top:5px;font-size:16px;letter-spacing:0.406px;">Booked</span><span class="t" style="left:13.40px;top:27px;font-size:16px;letter-spacing:0.592px;">Consultation</span><span class="t" style="left:210.20px;top:5px;font-size:16px;letter-spacing:-0.957px;">GPD28</span><svg class="ic" style="left:259.54px;top:4.50px;" width="13.20" height="18.20" viewBox="0 0 13.2 17.7" preserveAspectRatio="none"><path d="M2.300 1H8.300L12.200 4.900V15.400A1.300 1.300 0 0 1 10.900 16.700H2.300A1.300 1.300 0 0 1 1 15.400V2.300A1.300 1.300 0 0 1 2.300 1Z" fill="none" stroke="#0c0c0c" stroke-width="2" stroke-linejoin="round"/><path d="M8 0.800L12.400 5.200H8Z" fill="#0c0c0c"/><path d="M3.300 9.300H9.900M3.300 12.300H9.900" stroke="#0c0c0c" stroke-width="1.800"/></svg><span class="t" style="left:274.54px;top:5px;font-size:16px;letter-spacing:-0.225px;">FN00000035</span><div class="c" style="left:364.20px;top:0;width:197.10px;height:48px"><span class="t" style="left:2.00px;top:5px;font-size:16px;font-weight:bold;letter-spacing:-0.138px;">MR TURNER, T, TIMOTHY</span><span class="t" style="left:2.00px;top:27px;font-size:16px;letter-spacing:-0.107px;">0825630000 Male Age: 28</span></div><span class="t" style="left:562.00px;top:5px;font-size:16px;letter-spacing:-0.764px;">PRACTITIONER:</span><span class="t" style="left:562.00px;top:27px;font-size:16px;letter-spacing:-1.084px;">DR G GROBELAAR</span><div class="c" style="left:757.50px;top:0;width:197.00px;height:48px"><span class="t" style="left:2.00px;top:5px;font-size:16px;font-weight:bold;letter-spacing:0.052px;">TURNER, T, TIMOTHY</span><span class="t" style="left:2.80px;top:27px;font-size:16px;letter-spacing:-0.550px;">BESTMED 712345</span></div></div><div class="bd" style="margin-left:-62px;left:1412.0px;width:163.0px;background:#aaaaaa"><span class="t" style="left:11.70px;top:4px;font-size:15px;font-weight:bold;letter-spacing:-0.236px;">Pain and Symptoms</span></div><div class="bd" style="margin-left:-62px;left:1579.0px;width:32.0px;background:#ff7701"><span class="t" style="left:10.59px;top:4px;font-size:15px;font-weight:bold;">C</span></div><div class="bd" style="margin-left:-62px;left:1615.3px;width:32.5px;background:#dd3352"><span class="t" style="left:10.84px;top:4px;font-size:15px;font-weight:bold;">D</span></div><div class="bd" style="margin-left:-62px;left:1651.1px;width:31.9px;background:#aaaaaa"><span class="t" style="left:10.95px;top:4px;font-size:15px;font-weight:bold;">S</span></div><div class="bd" style="margin-left:-62px;left:1686.0px;width:28.0px;background:#aaaaaa"><span class="t" style="left:11.91px;top:4px;font-size:15px;font-weight:bold;">I</span></div><div class="bd" style="margin-left:-62px;left:1718.1px;width:31.9px;background:#dd4b39"><span class="t" style="left:10.54px;top:4px;font-size:15px;font-weight:bold;">A</span></div><div class="bd" style="margin-left:-62px;left:1753.0px;width:31.9px;background:#ff7701"><span class="t" style="left:10.95px;top:4px;font-size:15px;font-weight:bold;">V</span></div><div class="bd" style="margin-left:-62px;left:1788.3px;width:38.8px;background:#dd4b39"><svg class="ic" style="left:11.75px;top:5.80px;" width="16.50" height="16.50" viewBox="0 0 16.5 16.5" preserveAspectRatio="none"><circle cx="8.250" cy="8.250" r="8.250" fill="#fff"/><circle cx="5.600" cy="6.400" r=".95" fill="#dd4b39"/><circle cx="10.900" cy="6.400" r=".95" fill="#dd4b39"/><path d="M4.700 11.900Q8.250 8.600 11.800 11.900" fill="none" stroke="#dd4b39" stroke-width="1.050" stroke-linecap="round"/></svg></div><div class="bd" style="margin-left:-62px;left:1830.9px;width:37.3px;background:#3c8dbc"><svg class="ic" style="left:11.45px;top:6.60px;" width="15.00" height="14.40" viewBox="0 0 15 13.5" preserveAspectRatio="none"><path d="M1.300 0H13.700A1.300 1.300 0 0 1 15 1.300V8.800H10.600A1 1 0 0 0 9.600 9.800V13.500H1.300A1.300 1.300 0 0 1 0 12.200V1.300A1.300 1.300 0 0 1 1.300 0Z" fill="#fff"/><path d="M10.500 9.700H15L10.500 13.500Z" fill="#fff" opacity=".88"/></svg></div></div>
<div class="b ev" style="left:62px;top:690px;width:1833px;height:49px;background:#636cf7;overflow:hidden"><div class="b" style="left:13px;top:0;width:98px;height:49px;background:#1783c8"></div><div class="b" style="left:1811px;top:0;width:22px;height:49px;background:#1783c8"></div><div class="c" style="left:0;top:0;width:1811px;height:46px"><span class="t" style="left:13.40px;top:6px;font-size:16px;letter-spacing:0.439px;">Invoiced</span><span class="t" style="left:13.40px;top:27px;font-size:16px;letter-spacing:0.592px;">Consultation</span><span class="t" style="left:210.20px;top:6px;font-size:16px;letter-spacing:-0.756px;">GPD122</span><svg class="ic" style="left:268.48px;top:5.15px;" width="13.20" height="18.20" viewBox="0 0 13.2 17.7" preserveAspectRatio="none"><path d="M2.300 1H8.300L12.200 4.900V15.400A1.300 1.300 0 0 1 10.900 16.700H2.300A1.300 1.300 0 0 1 1 15.400V2.300A1.300 1.300 0 0 1 2.300 1Z" fill="none" stroke="#0c0c0c" stroke-width="2" stroke-linejoin="round"/><path d="M8 0.800L12.400 5.200H8Z" fill="#0c0c0c"/><path d="M3.300 9.300H9.900M3.300 12.300H9.900" stroke="#0c0c0c" stroke-width="1.800"/></svg><span class="t" style="left:283.48px;top:6px;font-size:16px;letter-spacing:-0.225px;">FN00000015</span><div class="c" style="left:372.70px;top:0;width:196.50px;height:49px"><span class="t" style="left:2.00px;top:6px;font-size:16px;font-weight:bold;letter-spacing:-0.245px;">MR STEYN, M, MARUIS</span><span class="t" style="left:2.00px;top:27px;font-size:16px;letter-spacing:-0.100px;">27820000001 Male Age: 33</span></div><span class="t" style="left:569.90px;top:6px;font-size:16px;letter-spacing:-0.764px;">PRACTITIONER:</span><span class="t" style="left:569.90px;top:27px;font-size:16px;letter-spacing:-1.084px;">DR G GROBELAAR</span><div class="c" style="left:762.80px;top:0;width:197.00px;height:49px"><span class="t" style="left:2.00px;top:6px;font-size:16px;font-weight:bold;letter-spacing:-0.245px;">STEYN, M, MARUIS</span><span class="t" style="left:2.80px;top:27px;font-size:16px;letter-spacing:-0.655px;">DISCOVERY MS87654321</span></div></div><div class="bd" style="margin-left:-62px;left:1412.0px;width:163.0px;background:#aaaaaa"><span class="t" style="left:11.70px;top:4px;font-size:15px;font-weight:bold;letter-spacing:-0.236px;">Pain and Symptoms</span></div><div class="bd" style="margin-left:-62px;left:1579.0px;width:32.0px;background:#aaaaaa"><span class="t" style="left:10.59px;top:4px;font-size:15px;font-weight:bold;">C</span></div><div class="bd" style="margin-left:-62px;left:1615.3px;width:32.5px;background:#dd3352"><span class="t" style="left:10.84px;top:4px;font-size:15px;font-weight:bold;">D</span></div><div class="bd" style="margin-left:-62px;left:1651.1px;width:31.9px;background:#aaaaaa"><span class="t" style="left:10.95px;top:4px;font-size:15px;font-weight:bold;">S</span></div><div class="bd" style="margin-left:-62px;left:1686.0px;width:28.0px;background:#aaaaaa"><span class="t" style="left:11.91px;top:4px;font-size:15px;font-weight:bold;">I</span></div><div class="bd" style="margin-left:-62px;left:1718.1px;width:31.9px;background:#00a65a"><span class="t" style="left:10.54px;top:4px;font-size:15px;font-weight:bold;">A</span></div><div class="bd" style="margin-left:-62px;left:1753.0px;width:31.9px;background:#ff7701"><span class="t" style="left:10.95px;top:4px;font-size:15px;font-weight:bold;">V</span></div><div class="bd" style="margin-left:-62px;left:1788.3px;width:38.8px;background:#dd4b39"><svg class="ic" style="left:11.75px;top:5.80px;" width="16.50" height="16.50" viewBox="0 0 16.5 16.5" preserveAspectRatio="none"><circle cx="8.250" cy="8.250" r="8.250" fill="#fff"/><circle cx="5.600" cy="6.400" r=".95" fill="#dd4b39"/><circle cx="10.900" cy="6.400" r=".95" fill="#dd4b39"/><path d="M4.700 11.900Q8.250 8.600 11.800 11.900" fill="none" stroke="#dd4b39" stroke-width="1.050" stroke-linecap="round"/></svg></div><div class="bd" style="margin-left:-62px;left:1830.9px;width:37.3px;background:#3c8dbc"><svg class="ic" style="left:11.45px;top:6.60px;" width="15.00" height="14.40" viewBox="0 0 15 13.5" preserveAspectRatio="none"><path d="M1.300 0H13.700A1.300 1.300 0 0 1 15 1.300V8.800H10.600A1 1 0 0 0 9.600 9.800V13.500H1.300A1.300 1.300 0 0 1 0 12.200V1.300A1.300 1.300 0 0 1 1.300 0Z" fill="#fff"/><path d="M10.500 9.700H15L10.500 13.500Z" fill="#fff" opacity=".88"/></svg></div></div>
<div class="b ev" style="left:62px;top:741px;width:1833px;height:49px;background:#b1d2f3;overflow:hidden"><div class="b" style="left:13px;top:0;width:98px;height:49px;background:#1783c8"></div><div class="b" style="left:1811px;top:0;width:22px;height:49px;background:#1783c8"></div><div class="c" style="left:0;top:0;width:1811px;height:46px"><span class="t" style="left:13.40px;top:6px;font-size:16px;letter-spacing:0.406px;">Booked</span><span class="t" style="left:13.40px;top:27px;font-size:16px;letter-spacing:0.592px;">Consultation</span><span class="t" style="left:210.20px;top:6px;font-size:16px;letter-spacing:-0.756px;">GPD142</span><svg class="ic" style="left:268.48px;top:4.80px;" width="13.20" height="18.20" viewBox="0 0 13.2 17.7" preserveAspectRatio="none"><path d="M2.300 1H8.300L12.200 4.900V15.400A1.300 1.300 0 0 1 10.900 16.700H2.300A1.300 1.300 0 0 1 1 15.400V2.300A1.300 1.300 0 0 1 2.300 1Z" fill="none" stroke="#0c0c0c" stroke-width="2" stroke-linejoin="round"/><path d="M8 0.800L12.400 5.200H8Z" fill="#0c0c0c"/><path d="M3.300 9.300H9.900M3.300 12.300H9.900" stroke="#0c0c0c" stroke-width="1.800"/></svg><span class="t" style="left:283.48px;top:6px;font-size:16px;letter-spacing:-0.225px;">FN00000052</span><div class="c" style="left:372.70px;top:0;width:196.50px;height:49px"><span class="t" style="left:2.00px;top:6px;font-size:16px;font-weight:bold;letter-spacing:-0.305px;">MR ERASMUS, J, JOSHUA</span><span class="t" style="left:2.00px;top:27px;font-size:16px;letter-spacing:-0.100px;">27765309858 Male Age: 33</span></div><span class="t" style="left:569.90px;top:6px;font-size:16px;letter-spacing:-0.764px;">PRACTITIONER:</span><span class="t" style="left:569.90px;top:27px;font-size:16px;letter-spacing:-1.084px;">DR G GROBELAAR</span><div class="c" style="left:762.80px;top:0;width:197.00px;height:49px"><span class="t" style="left:2.00px;top:6px;font-size:16px;font-weight:bold;letter-spacing:-0.317px;">ERASMUS, J, JOSHUA</span><span class="t" style="left:2.80px;top:27px;font-size:16px;letter-spacing:-0.281px;">BONITAS BJWE87654321</span></div></div><div class="bd" style="margin-left:-62px;left:1412.0px;width:163.0px;background:#aaaaaa"><span class="t" style="left:11.70px;top:4px;font-size:15px;font-weight:bold;letter-spacing:-0.236px;">Pain and Symptoms</span></div><div class="bd" style="margin-left:-62px;left:1579.0px;width:32.0px;background:#aaaaaa"><span class="t" style="left:10.59px;top:4px;font-size:15px;font-weight:bold;">C</span></div><div class="bd" style="margin-left:-62px;left:1615.3px;width:32.5px;background:#dd3352"><span class="t" style="left:10.84px;top:4px;font-size:15px;font-weight:bold;">D</span></div><div class="bd" style="margin-left:-62px;left:1651.1px;width:31.9px;background:#aaaaaa"><span class="t" style="left:10.95px;top:4px;font-size:15px;font-weight:bold;">S</span></div><div class="bd" style="margin-left:-62px;left:1686.0px;width:28.0px;background:#aaaaaa"><span class="t" style="left:11.91px;top:4px;font-size:15px;font-weight:bold;">I</span></div><div class="bd" style="margin-left:-62px;left:1718.1px;width:31.9px;background:#00a65a"><span class="t" style="left:10.54px;top:4px;font-size:15px;font-weight:bold;">A</span></div><div class="bd" style="margin-left:-62px;left:1753.0px;width:31.9px;background:#ff7701"><span class="t" style="left:10.95px;top:4px;font-size:15px;font-weight:bold;">V</span></div><div class="bd" style="margin-left:-62px;left:1788.3px;width:38.8px;background:#dd4b39"><svg class="ic" style="left:11.75px;top:5.80px;" width="16.50" height="16.50" viewBox="0 0 16.5 16.5" preserveAspectRatio="none"><circle cx="8.250" cy="8.250" r="8.250" fill="#fff"/><circle cx="5.600" cy="6.400" r=".95" fill="#dd4b39"/><circle cx="10.900" cy="6.400" r=".95" fill="#dd4b39"/><path d="M4.700 11.900Q8.250 8.600 11.800 11.900" fill="none" stroke="#dd4b39" stroke-width="1.050" stroke-linecap="round"/></svg></div><div class="bd" style="margin-left:-62px;left:1830.9px;width:37.3px;background:#3c8dbc"><svg class="ic" style="left:11.45px;top:6.60px;" width="15.00" height="14.40" viewBox="0 0 15 13.5" preserveAspectRatio="none"><path d="M1.300 0H13.700A1.300 1.300 0 0 1 15 1.300V8.800H10.600A1 1 0 0 0 9.600 9.800V13.500H1.300A1.300 1.300 0 0 1 0 12.200V1.300A1.300 1.300 0 0 1 1.300 0Z" fill="#fff"/><path d="M10.500 9.700H15L10.500 13.500Z" fill="#fff" opacity=".88"/></svg></div></div>
<div class="b ev" style="left:62px;top:792px;width:1833px;height:48px;background:#b1d2f3;overflow:hidden"><div class="b" style="left:13px;top:0;width:98px;height:48px;background:#289d8f"></div><div class="b" style="left:1811px;top:0;width:22px;height:48px;background:#289d8f"></div><div class="c" style="left:0;top:0;width:1811px;height:45px"><span class="t" style="left:13.40px;top:5px;font-size:16px;letter-spacing:0.406px;">Booked</span><span class="t" style="left:13.40px;top:27px;font-size:16px;letter-spacing:0.371px;">Follow Up</span><span class="t" style="left:210.20px;top:5px;font-size:16px;letter-spacing:-0.756px;">GPD163</span><svg class="ic" style="left:268.48px;top:4.45px;" width="13.20" height="18.20" viewBox="0 0 13.2 17.7" preserveAspectRatio="none"><path d="M2.300 1H8.300L12.200 4.900V15.400A1.300 1.300 0 0 1 10.900 16.700H2.300A1.300 1.300 0 0 1 1 15.400V2.300A1.300 1.300 0 0 1 2.300 1Z" fill="none" stroke="#0c0c0c" stroke-width="2" stroke-linejoin="round"/><path d="M8 0.800L12.400 5.200H8Z" fill="#0c0c0c"/><path d="M3.300 9.300H9.900M3.300 12.300H9.900" stroke="#0c0c0c" stroke-width="1.800"/></svg><span class="t" style="left:283.48px;top:5px;font-size:16px;letter-spacing:-0.225px;">FN00000074</span><div class="c" style="left:372.70px;top:0;width:196.50px;height:48px"><span class="t" style="left:2.00px;top:5px;font-size:16px;font-weight:bold;letter-spacing:-0.282px;">MR SHAN, K, KANKU</span><span class="t" style="left:2.00px;top:27px;font-size:16px;letter-spacing:-0.100px;">278155477551 Male Age: 3</span></div><span class="t" style="left:569.90px;top:5px;font-size:16px;letter-spacing:-0.764px;">PRACTITIONER:</span><span class="t" style="left:569.90px;top:27px;font-size:16px;letter-spacing:-1.084px;">DR G GROBELAAR</span><div class="c" style="left:762.80px;top:0;width:197.00px;height:48px"><span class="t" style="left:2.00px;top:5px;font-size:16px;font-weight:bold;letter-spacing:-0.291px;">SHAN, K, KANKU</span><span class="t" style="left:2.80px;top:27px;font-size:16px;letter-spacing:-0.389px;">PRIVATE PATIENT 1233446</span></div></div><div class="bd" style="margin-left:-62px;left:1412.0px;width:163.0px;background:#aaaaaa"><span class="t" style="left:11.70px;top:4px;font-size:15px;font-weight:bold;letter-spacing:-0.236px;">Pain and Symptoms</span></div><div class="bd" style="margin-left:-62px;left:1579.0px;width:32.0px;background:#aaaaaa"><span class="t" style="left:10.59px;top:4px;font-size:15px;font-weight:bold;">C</span></div><div class="bd" style="margin-left:-62px;left:1615.3px;width:32.5px;background:#dd3352"><span class="t" style="left:10.84px;top:4px;font-size:15px;font-weight:bold;">D</span></div><div class="bd" style="margin-left:-62px;left:1651.1px;width:31.9px;background:#aaaaaa"><span class="t" style="left:10.95px;top:4px;font-size:15px;font-weight:bold;">S</span></div><div class="bd" style="margin-left:-62px;left:1686.0px;width:28.0px;background:#aaaaaa"><span class="t" style="left:11.91px;top:4px;font-size:15px;font-weight:bold;">I</span></div><div class="bd" style="margin-left:-62px;left:1718.1px;width:31.9px;background:#dd4b39"><span class="t" style="left:10.54px;top:4px;font-size:15px;font-weight:bold;">A</span></div><div class="bd" style="margin-left:-62px;left:1753.0px;width:31.9px;background:#dd4b39"><span class="t" style="left:10.95px;top:4px;font-size:15px;font-weight:bold;">V</span></div><div class="bd" style="margin-left:-62px;left:1788.3px;width:38.8px;background:#dd4b39"><svg class="ic" style="left:11.75px;top:5.80px;" width="16.50" height="16.50" viewBox="0 0 16.5 16.5" preserveAspectRatio="none"><circle cx="8.250" cy="8.250" r="8.250" fill="#fff"/><circle cx="5.600" cy="6.400" r=".95" fill="#dd4b39"/><circle cx="10.900" cy="6.400" r=".95" fill="#dd4b39"/><path d="M4.700 11.900Q8.250 8.600 11.800 11.900" fill="none" stroke="#dd4b39" stroke-width="1.050" stroke-linecap="round"/></svg></div><div class="bd" style="margin-left:-62px;left:1830.9px;width:37.3px;background:#3c8dbc"><svg class="ic" style="left:11.45px;top:6.60px;" width="15.00" height="14.40" viewBox="0 0 15 13.5" preserveAspectRatio="none"><path d="M1.300 0H13.700A1.300 1.300 0 0 1 15 1.300V8.800H10.600A1 1 0 0 0 9.600 9.800V13.500H1.300A1.300 1.300 0 0 1 0 12.200V1.300A1.300 1.300 0 0 1 1.300 0Z" fill="#fff"/><path d="M10.500 9.700H15L10.500 13.500Z" fill="#fff" opacity=".88"/></svg></div></div>
<div class="b ev" style="left:62px;top:842px;width:1833px;height:66px;background:#f3af53;overflow:hidden"><div class="b" style="left:0;top:49px;width:1811px;height:2px;background:rgba(0,0,40,.045)"></div><div class="b" style="left:13px;top:0;width:98px;height:66px;background:#ec4096"></div><div class="b" style="left:1811px;top:0;width:22px;height:66px;background:#ec4096"></div><div class="c" style="left:0;top:0;width:1811px;height:62px"><span class="t" style="left:13.40px;top:6px;font-size:16px;letter-spacing:-0.092px;">Done</span><span class="t" style="left:13.40px;top:27px;font-size:16px;letter-spacing:0.439px;">Invoiced</span><span class="t" style="left:210.20px;top:6px;font-size:16px;letter-spacing:-0.957px;">GPD45</span><svg class="ic" style="left:259.54px;top:5.10px;" width="13.20" height="18.20" viewBox="0 0 13.2 17.7" preserveAspectRatio="none"><path d="M2.300 1H8.300L12.200 4.900V15.400A1.300 1.300 0 0 1 10.900 16.700H2.300A1.300 1.300 0 0 1 1 15.400V2.300A1.300 1.300 0 0 1 2.300 1Z" fill="none" stroke="#0c0c0c" stroke-width="2" stroke-linejoin="round"/><path d="M8 0.800L12.400 5.200H8Z" fill="#0c0c0c"/><path d="M3.300 9.300H9.900M3.300 12.300H9.900" stroke="#0c0c0c" stroke-width="1.800"/></svg><span class="t" style="left:274.54px;top:6px;font-size:16px;letter-spacing:-0.225px;">FN00000028</span><div class="c" style="left:364.20px;top:0;width:197.10px;height:66px"><span class="t" style="left:2.00px;top:6px;font-size:16px;font-weight:bold;letter-spacing:-0.075px;">MS LYNDON, K, KIM</span><span class="t" style="left:2.00px;top:27px;font-size:16px;letter-spacing:-0.062px;">2782065501 Female Age: 3</span><span class="t" style="left:2.00px;top:49px;font-size:16px;letter-spacing:-0.224px;">7 years</span></div><span class="t" style="left:562.00px;top:6px;font-size:16px;letter-spacing:-0.764px;">PRACTITIONER:</span><span class="t" style="left:562.00px;top:27px;font-size:16px;letter-spacing:-0.792px;">DR S SMITH</span><div class="c" style="left:757.50px;top:0;width:197.00px;height:66px"><span class="t" style="left:2.00px;top:6px;font-size:16px;font-weight:bold;letter-spacing:-0.018px;">LYNDON, K, KIM</span><span class="t" style="left:2.80px;top:27px;font-size:16px;letter-spacing:-0.616px;">DISCOVERY 689489325</span></div></div><div class="bd" style="margin-left:-62px;left:1412.0px;width:163.0px;background:#aaaaaa"><span class="t" style="left:11.70px;top:4px;font-size:15px;font-weight:bold;letter-spacing:-0.236px;">Pain and Symptoms</span></div><div class="bd" style="margin-left:-62px;left:1579.0px;width:32.0px;background:#aaaaaa"><span class="t" style="left:10.59px;top:4px;font-size:15px;font-weight:bold;">C</span></div><div class="bd" style="margin-left:-62px;left:1615.3px;width:32.5px;background:#dd3352"><span class="t" style="left:10.84px;top:4px;font-size:15px;font-weight:bold;">D</span></div><div class="bd" style="margin-left:-62px;left:1651.1px;width:31.9px;background:#aaaaaa"><span class="t" style="left:10.95px;top:4px;font-size:15px;font-weight:bold;">S</span></div><div class="bd" style="margin-left:-62px;left:1686.0px;width:28.0px;background:#aaaaaa"><span class="t" style="left:11.91px;top:4px;font-size:15px;font-weight:bold;">I</span></div><div class="bd" style="margin-left:-62px;left:1718.1px;width:31.9px;background:#dd4b39"><span class="t" style="left:10.54px;top:4px;font-size:15px;font-weight:bold;">A</span></div><div class="bd" style="margin-left:-62px;left:1753.0px;width:31.9px;background:#ff7701"><span class="t" style="left:10.95px;top:4px;font-size:15px;font-weight:bold;">V</span></div><div class="bd" style="margin-left:-62px;left:1788.3px;width:38.8px;background:#00a65a"><svg class="ic" style="left:11.75px;top:5.80px;" width="16.50" height="16.50" viewBox="0 0 16.5 16.5" preserveAspectRatio="none"><circle cx="8.250" cy="8.250" r="8.250" fill="#fff"/><circle cx="5.600" cy="6.400" r=".95" fill="#00a65a"/><circle cx="10.900" cy="6.400" r=".95" fill="#00a65a"/><path d="M4.500 9.900Q8.250 13.800 12 9.900" fill="none" stroke="#00a65a" stroke-width="1.050" stroke-linecap="round"/></svg></div><div class="bd" style="margin-left:-62px;left:1830.9px;width:37.3px;background:#3c8dbc"><svg class="ic" style="left:11.45px;top:6.60px;" width="15.00" height="14.40" viewBox="0 0 15 13.5" preserveAspectRatio="none"><path d="M1.300 0H13.700A1.300 1.300 0 0 1 15 1.300V8.800H10.600A1 1 0 0 0 9.600 9.800V13.500H1.300A1.300 1.300 0 0 1 0 12.200V1.300A1.300 1.300 0 0 1 1.300 0Z" fill="#fff"/><path d="M10.500 9.700H15L10.500 13.500Z" fill="#fff" opacity=".88"/></svg></div></div>
</div>
</body></html>
